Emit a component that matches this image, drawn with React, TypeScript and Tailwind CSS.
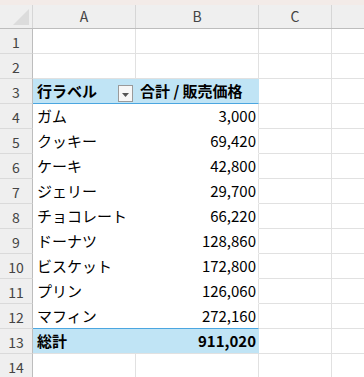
import React from 'react';

interface Row {
  label: string;
  value: string;
}

const rows: Row[] = [
  { label: 'ガム', value: '3,000' },
  { label: 'クッキー', value: '69,420' },
  { label: 'ケーキ', value: '42,800' },
  { label: 'ジェリー', value: '29,700' },
  { label: 'チョコレート', value: '66,220' },
  { label: 'ドーナツ', value: '128,860' },
  { label: 'ビスケット', value: '172,800' },
  { label: 'プリン', value: '126,060' },
  { label: 'マフィン', value: '272,160' },
];

const font = { fontFamily: '"Noto Sans CJK JP", "Noto Sans", sans-serif' };

const RowHead: React.FC<{ n: number }> = ({ n }) => (
  <div className="w-[33px] h-full shrink-0 bg-[#efefef] border-r border-r-[#bdbdbd] border-b border-b-[#dadada] flex items-center justify-center text-[14px] text-[#444] pt-[2px]">
    {n}
  </div>
);

const Blank: React.FC<{ w: string }> = ({ w }) => (
  <div className={`${w} h-full shrink-0 border-r border-b border-[#e1e1e1]`} />
);

const App: React.FC = () => {
  return (
    <div className="w-[364px] h-[377px] overflow-hidden bg-white text-black" style={font}>
      <div className="h-[5px] bg-[#f3ebe8]" />
      {/* column headers */}
      <div className="flex h-[24px] bg-[#efefef] border-b border-b-[#bdbdbd] text-[14px] text-[#444]">
        <div className="w-[33px] h-full shrink-0 border-r border-r-[#d6d6d6] relative">
          <svg className="absolute left-[13px] top-[4px]" width="16" height="16" viewBox="0 0 16 16">
            <polygon points="16,0 16,16 0,16" fill="#dcdcdc" />
          </svg>
        </div>
        <div className="w-[103px] h-full shrink-0 border-r border-r-[#d6d6d6] flex items-center justify-center">A</div>
        <div className="w-[123px] h-full shrink-0 border-r border-r-[#d6d6d6] flex items-center justify-center">B</div>
        <div className="w-[73px] h-full shrink-0 border-r border-r-[#d6d6d6] flex items-center justify-center">C</div>
        <div className="flex-1" />
      </div>

      {[1, 2].map((n) => (
        <div key={n} className="flex h-[25px]">
          <RowHead n={n} />
          <Blank w="w-[103px]" />
          <Blank w="w-[123px]" />
          <Blank w="w-[73px]" />
          <div className="flex-1 border-b border-[#e1e1e1]" />
        </div>
      ))}

      {/* pivot header */}
      <div className="flex h-[25px]">
        <RowHead n={3} />
        <div className="w-[103px] h-full shrink-0 bg-[#c0e4f5] border-b border-b-[#4ba6e0] relative flex items-center pl-[4px] text-[15px] font-bold">
          行ラベル
          <div className="absolute right-[3px] top-[6px] w-[15px] h-[17px] bg-[#f7f7f7] border border-[#9a9a9a] flex items-center justify-center">
            <svg width="7" height="4" viewBox="0 0 7 4" className="mt-[2px]">
              <polygon points="0,0 7,0 3.5,4" fill="#555" />
            </svg>
          </div>
        </div>
        <div className="w-[123px] h-full shrink-0 bg-[#c0e4f5] border-b border-b-[#4ba6e0] border-r border-r-[#c0e4f5] flex items-center pl-[4px] text-[15px] font-bold whitespace-nowrap">
          合計 / 販売価格
        </div>
        <Blank w="w-[73px]" />
        <div className="flex-1 border-b border-[#e1e1e1]" />
      </div>

      {rows.map((r, i) => (
        <div key={r.label} className="flex h-[25px]">
          <RowHead n={i + 4} />
          <div
            className={`w-[103px] h-full shrink-0 flex items-center pl-[4px] text-[15px] whitespace-nowrap ${
              i === rows.length - 1 ? 'border-b border-b-[#4ba6e0]' : 'border-b border-b-white'
            }`}
          >
            {r.label}
          </div>
          <div
            className={`w-[123px] h-full shrink-0 flex items-center justify-end pr-[2px] text-[15px] border-r border-r-[#e1e1e1] ${
              i === rows.length - 1 ? 'border-b border-b-[#4ba6e0]' : 'border-b border-b-white'
            }`}
          >
            {r.value}
          </div>
          <Blank w="w-[73px]" />
          <div className="flex-1 border-b border-[#e1e1e1]" />
        </div>
      ))}

      {/* grand total */}
      <div className="flex h-[25px]">
        <RowHead n={13} />
        <div className="w-[103px] h-full shrink-0 bg-[#c0e4f5] border-b border-b-[#e1e1e1] flex items-center pl-[4px] text-[15px] font-bold">
          総計
        </div>
        <div className="w-[123px] h-full shrink-0 bg-[#c0e4f5] border-b border-b-[#e1e1e1] border-r border-r-[#c0e4f5] flex items-center justify-end pr-[2px] text-[15px] font-bold">
          911,020
        </div>
        <Blank w="w-[73px]" />
        <div className="flex-1 border-b border-[#e1e1e1]" />
      </div>

      <div className="flex h-[25px]">
        <RowHead n={14} />
        <Blank w="w-[103px]" />
        <Blank w="w-[123px]" />
        <Blank w="w-[73px]" />
        <div className="flex-1 border-b border-[#e1e1e1]" />
      </div>
    </div>
  );
};

export default App;
